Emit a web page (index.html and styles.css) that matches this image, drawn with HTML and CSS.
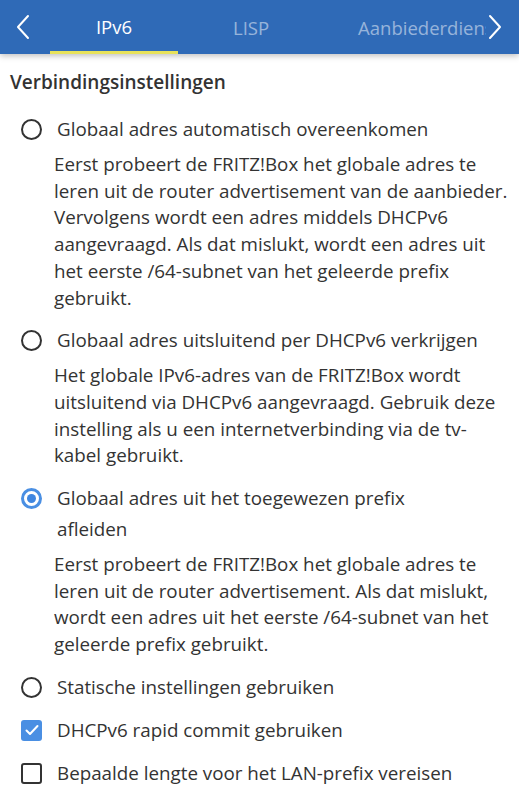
FILE: index.html
```html
<!DOCTYPE html>
<html lang="nl">
<head>
<meta charset="utf-8">
<title>IPv6</title>
<link rel="stylesheet" href="styles.css">
</head>
<body>
<header class="topbar">
  <div class="nav nav-left">
    <svg width="14" height="26" viewBox="0 0 14 26"><path d="M12 2 L2 13 L12 24" fill="none" stroke="#fff" stroke-width="2" stroke-linecap="round" stroke-linejoin="round"/></svg>
  </div>
  <div class="tabs">
    <div class="tab tab-active">IPv6</div>
    <div class="tab tab-lisp">LISP</div>
    <div class="tab tab-prov">Aanbiederdiensten</div>
  </div>
  <div class="nav nav-right">
    <svg width="14" height="26" viewBox="0 0 14 26"><path d="M2 2 L12 13 L2 24" fill="none" stroke="#fff" stroke-width="2" stroke-linecap="round" stroke-linejoin="round"/></svg>
  </div>
</header>
<main class="content">
  <h1 class="heading">Verbindingsinstellingen</h1>
  <div class="options">
    <div class="option">
      <div class="row"><span class="radio"></span><span class="label">Globaal adres automatisch overeenkomen</span></div>
      <p class="desc">Eerst probeert de FRITZ!Box het globale adres te<br>leren uit de router advertisement van de aanbieder.<br>Vervolgens wordt een adres middels DHCPv6<br>aangevraagd. Als dat mislukt, wordt een adres uit<br>het eerste /64-subnet van het geleerde prefix<br>gebruikt.</p>
    </div>
    <div class="option">
      <div class="row"><span class="radio"></span><span class="label">Globaal adres uitsluitend per DHCPv6 verkrijgen</span></div>
      <p class="desc">Het globale IPv6-adres van de FRITZ!Box wordt<br>uitsluitend via DHCPv6 aangevraagd. Gebruik deze<br>instelling als u een internetverbinding via de tv-<br>kabel gebruikt.</p>
    </div>
    <div class="option">
      <div class="row"><span class="radio radio-on"></span><span class="label">Globaal adres uit het toegewezen prefix<br>afleiden</span></div>
      <p class="desc">Eerst probeert de FRITZ!Box het globale adres te<br>leren uit de router advertisement. Als dat mislukt,<br>wordt een adres uit het eerste /64-subnet van het<br>geleerde prefix gebruikt.</p>
    </div>
    <div class="option">
      <div class="row"><span class="radio"></span><span class="label">Statische instellingen gebruiken</span></div>
    </div>
    <div class="option">
      <div class="row"><span class="check check-on"><svg width="14" height="12" viewBox="0 0 14 12"><path d="M1.5 6.5 L5 10 L12.5 2" fill="none" stroke="#fff" stroke-width="2" stroke-linecap="round" stroke-linejoin="round"/></svg></span><span class="label">DHCPv6 rapid commit gebruiken</span></div>
    </div>
    <div class="option">
      <div class="row"><span class="check"></span><span class="label">Bepaalde lengte voor het LAN-prefix vereisen</span></div>
    </div>
  </div>
</main>
</body>
</html>
```
FILE: styles.css
```css
* { box-sizing: border-box; }
html, body { margin: 0; padding: 0; background: #fff; }
body {
  font-family: "Open Sans", "Liberation Sans", sans-serif;
  color: #333;
  width: 519px;
  height: 800px;
  overflow: hidden;
}
.topbar {
  height: 54px;
  background: #2f6ab7;
  display: flex;
  align-items: stretch;
  box-shadow: 0 2px 6px rgba(0,0,0,0.25);
  position: relative;
  z-index: 1;
}
.nav {
  display: flex;
  align-items: center;
  justify-content: center;
}
.nav-left { width: 50px; justify-content: flex-start; padding-left: 16px; }
.nav-right { width: 33px; justify-content: flex-start; padding-left: 2px; }
.tabs {
  flex: 1;
  display: flex;
  overflow: hidden;
  white-space: nowrap;
}
.tab {
  font-size: 18.5px;
  color: rgba(255,255,255,0.5);
  display: flex;
  align-items: center;
  flex: none;
}
.tab-active {
  width: 128px;
  justify-content: center;
  color: #fff;
  border-bottom: 3px solid #e8e25a;
  padding-top: 2px;
}
.tab-lisp { margin-left: 55px; }
.tab-prov { margin-left: 89px; }
.content { padding: 0 10px; }
.heading {
  margin: 0;
  padding-top: 70px;
  font-size: 19px;
  font-weight: 600;
  line-height: 24px;
  margin-top: -54px;
}
.options {
  margin-top: 20px;
  display: flex;
  flex-direction: column;
  gap: 12px;
}
.row {
  display: flex;
  align-items: flex-start;
  padding-left: 11px;
}
.label {
  font-size: 18.8px;
  line-height: 31px;
  white-space: nowrap;
}
.radio, .check {
  flex: none;
  width: 21px;
  height: 21px;
  margin-top: 5px;
  margin-right: 15px;
  display: flex;
  align-items: center;
  justify-content: center;
}
.radio {
  border: 2px solid #333;
  border-radius: 50%;
}
.radio-on {
  border: 3px solid #4a8fe3;
}
.radio-on::after {
  content: "";
  width: 9px;
  height: 9px;
  border-radius: 50%;
  background: #3f86e0;
}
.check {
  border: 2.5px solid #333;
  border-radius: 3px;
}
.check-on {
  border: none;
  background: #4a8fe3;
}
.desc {
  margin: 6px 0 2px 44px;
  font-size: 18.8px;
  line-height: 26.7px;
  white-space: nowrap;
}
```
